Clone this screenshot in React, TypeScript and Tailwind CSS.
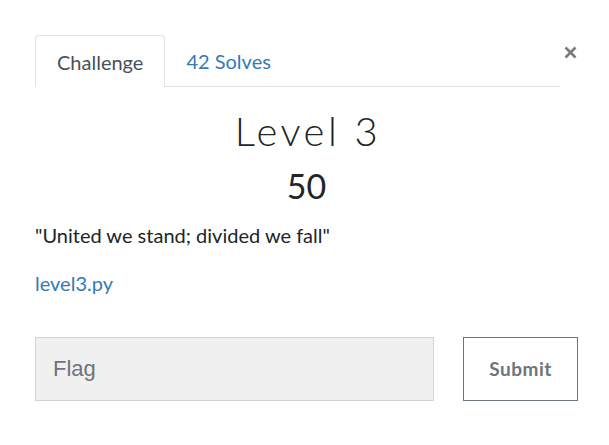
import { useState } from "react";

export default function App() {
  const [flag, setFlag] = useState("");

  return (
    <div className="w-[609px] h-[445px] bg-white text-[#212529] font-['Lato',sans-serif] pl-[35px] pr-[31px] pt-[35px]">
      {/* Header: tabs + close */}
      <div className="flex items-start">
        <nav className="flex flex-1 border-b border-[#dee2e6] h-[52px]">
          <div className="h-[52px] px-[21px] flex items-center border border-b-0 border-[#dee2e6] rounded-t-[4px] bg-white text-[20px] text-[#495057] -mb-px">
            Challenge
          </div>
          <div className="h-[52px] px-[21px] flex items-center text-[20px] text-[#337ab7]">
            42 Solves
          </div>
        </nav>
        <button className="ml-[2px] mt-[9px] w-[16px] h-[16px] flex items-center justify-center">
          <svg width="13" height="13" viewBox="0 0 13 13">
            <path d="M1.5 1.5 L11.5 11.5 M11.5 1.5 L1.5 11.5" stroke="#7a7a7a" strokeWidth="2.6" strokeLinecap="butt" />
          </svg>
        </button>
      </div>

      {/* Title */}
      <div className="text-center mt-[20px]">
        <h3 className="text-[40px] leading-[48px] font-light tracking-[3.5px] pl-[3px]">Level 3</h3>
        <h4 className="text-[34px] leading-[40px] mt-[11px]">50</h4>
      </div>

      <p className="mt-[14px] text-[20px] leading-[30px]">"United we stand; divided we fall"</p>
      <p className="mt-[18px] text-[20px] leading-[30px]">
        <a href="#" className="text-[#337ab7]">level3.py</a>
      </p>

      {/* Flag form */}
      <div className="flex mt-[39px]">
        <input
          value={flag}
          onChange={(e) => setFlag(e.target.value)}
          placeholder="Flag"
          className="w-[399px] h-[64px] bg-[#f0f0f0] border border-[#ced4da] px-[17px] text-[22px] font-['Liberation_Sans',sans-serif] text-[#495057] placeholder:text-[#6c757d] outline-none"
        />
        <button className="ml-auto w-[115px] h-[64px] border-[1.5px] border-[#6c757d] text-[#6c757d] font-bold text-[19px] font-['Lato',sans-serif] tracking-[0.5px]">
          Submit
        </button>
      </div>
    </div>
  );
}
